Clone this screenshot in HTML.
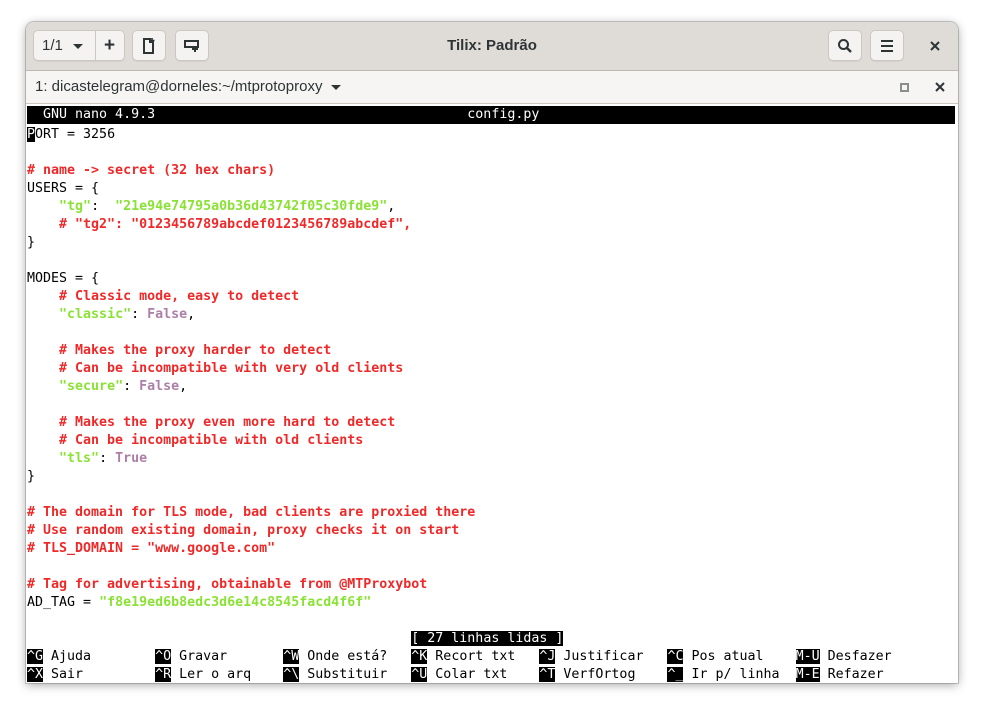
<!DOCTYPE html>
<html><head><meta charset="utf-8"><style>
html,body{margin:0;padding:0;width:984px;height:712px;background:#fff;overflow:hidden}
#win{position:absolute;left:26px;top:22px;width:932px;height:661px;background:#fff;border-radius:8px 8px 0 0;box-shadow:0 2px 10px rgba(0,0,0,.35),0 0 0 1px rgba(0,0,0,.18);overflow:hidden}
#hdr{position:absolute;left:0;top:0;width:932px;height:48px;background:#dfdcd8;border-bottom:1px solid #bfb8b1;font-family:"Liberation Sans",sans-serif}
.btn{position:absolute;top:8px;height:31px;background:#f4f3f2;border:1px solid #cdc7c2;border-radius:5px;box-sizing:border-box;box-shadow:0 1px 0 rgba(0,0,0,.05)}
#title{position:absolute;left:0;width:932px;top:15px;text-align:center;font-weight:bold;font-size:15px;color:#2e3436}
#tab{position:absolute;left:0;top:49px;width:932px;height:32px;background:#f6f5f4;border-bottom:1px solid #cdc7c2;font-family:"Liberation Sans",sans-serif;font-size:15px;color:#2e3436}
#term{position:absolute;left:1px;top:86px;width:930px;height:575px;background:#fff}
.l{position:absolute;left:0;height:18px;line-height:18px;white-space:pre;font-family:"DejaVu Sans Mono",monospace;font-size:13.3px;color:#000}
.r{color:#ef2929;font-weight:bold}.g{color:#8ae234;font-weight:bold}.p{color:#ad7fa8;font-weight:bold}
.i{background:#000;color:#fff}
</style></head><body>
<div id="win">
<div id="hdr">
 <div class="btn" style="left:7px;width:92px"></div>
 <div style="position:absolute;left:69px;top:9px;width:1px;height:29px;background:#cdc7c2"></div>
 <div style="position:absolute;left:16px;top:15px;font-size:15px;color:#2e3436">1/1</div>
 <div style="position:absolute;left:47px;top:22px;width:0;height:0;border-left:5px solid transparent;border-right:5px solid transparent;border-top:5px solid #2e3436"></div>
 <div style="position:absolute;left:78px;top:13px;font-size:19px;font-weight:bold;color:#2e3436">+</div>
 <div class="btn" style="left:106px;width:34px"></div>
 <svg style="position:absolute;left:114px;top:15px" width="18" height="18"><path d="M4 2h6v3h3v11H4z" fill="none" stroke="#2e3436" stroke-width="2"/><path d="M12 1v5M9.5 3.5h5" stroke="#2e3436" stroke-width="1.6"/></svg>
 <div class="btn" style="left:149px;width:34px"></div>
 <svg style="position:absolute;left:157px;top:15px" width="18" height="18"><path d="M2 4h13v6H2z" fill="none" stroke="#2e3436" stroke-width="2"/><path d="M12 9v6M9 12h6" stroke="#2e3436" stroke-width="2"/></svg>
 <div id="title">Tilix: Padrão</div>
 <div class="btn" style="left:802px;width:34px"></div>
 <svg style="position:absolute;left:810px;top:15px" width="18" height="18"><circle cx="7.5" cy="7.5" r="4.5" fill="none" stroke="#2e3436" stroke-width="2"/><path d="M11 11l4 4" stroke="#2e3436" stroke-width="2.4"/></svg>
 <div class="btn" style="left:844px;width:34px"></div>
 <svg style="position:absolute;left:852px;top:15px" width="18" height="18"><path d="M3 4h12M3 9h12M3 14h12" stroke="#2e3436" stroke-width="2"/></svg>
 <svg style="position:absolute;left:903px;top:18px" width="12" height="12"><path d="M2 2l8 8M10 2l-8 8" stroke="#2e3436" stroke-width="2"/></svg>
</div>
<div id="tab">
 <div style="position:absolute;left:9px;top:7px">1: dicastelegram@dorneles:~/mtprotoproxy</div>
 <div style="position:absolute;left:305px;top:14px;width:0;height:0;border-left:5px solid transparent;border-right:5px solid transparent;border-top:5px solid #2e3436"></div>
 <div style="position:absolute;left:874px;top:12px;width:5px;height:5px;border:2px solid #8b8e8f"></div>
 <svg style="position:absolute;left:908px;top:10px" width="12" height="12"><path d="M2 2l8 8M10 2l-8 8" stroke="#2e3436" stroke-width="2"/></svg>
</div>
<div id="term">
<div class="l i" style="top:-2px;width:928px">  GNU nano 4.9.3                                       config.py</div>
<div class="l" style="top:18px"><span class="i">P</span>ORT = 3256</div>
<div class="l r" style="top:54px"># name -&gt; secret (32 hex chars)</div>
<div class="l" style="top:72px">USERS = {</div>
<div class="l" style="top:90px">    <span class="g">"tg"</span>:  <span class="g">"21e94e74795a0b36d43742f05c30fde9"</span>,</div>
<div class="l r" style="top:108px">    # "tg2": "0123456789abcdef0123456789abcdef",</div>
<div class="l" style="top:126px">}</div>
<div class="l" style="top:162px">MODES = {</div>
<div class="l r" style="top:180px">    # Classic mode, easy to detect</div>
<div class="l" style="top:198px">    <span class="g">"classic"</span>: <span class="p">False</span>,</div>
<div class="l r" style="top:234px">    # Makes the proxy harder to detect</div>
<div class="l r" style="top:252px">    # Can be incompatible with very old clients</div>
<div class="l" style="top:270px">    <span class="g">"secure"</span>: <span class="p">False</span>,</div>
<div class="l r" style="top:306px">    # Makes the proxy even more hard to detect</div>
<div class="l r" style="top:324px">    # Can be incompatible with old clients</div>
<div class="l" style="top:342px">    <span class="g">"tls"</span>: <span class="p">True</span></div>
<div class="l" style="top:360px">}</div>
<div class="l r" style="top:396px"># The domain for TLS mode, bad clients are proxied there</div>
<div class="l r" style="top:414px"># Use random existing domain, proxy checks it on start</div>
<div class="l r" style="top:432px"># TLS_DOMAIN = "www.google.com"</div>
<div class="l r" style="top:468px"># Tag for advertising, obtainable from @MTProxybot</div>
<div class="l" style="top:486px">AD_TAG = <span class="g">"f8e19ed6b8edc3d6e14c8545facd4f6f"</span></div>
<div class="l" style="top:522px">                                                <span class="i">[ 27 linhas lidas ]</span></div>
<div class="l" style="top:540px"><span class="i">^G</span> Ajuda        <span class="i">^O</span> Gravar       <span class="i">^W</span> Onde está?   <span class="i">^K</span> Recort txt   <span class="i">^J</span> Justificar   <span class="i">^C</span> Pos atual    <span class="i">M-U</span> Desfazer</div>
<div class="l" style="top:558px"><span class="i">^X</span> Sair         <span class="i">^R</span> Ler o arq    <span class="i">^\</span> Substituir   <span class="i">^U</span> Colar txt    <span class="i">^T</span> VerfOrtog    <span class="i">^_</span> Ir p/ linha  <span class="i">M-E</span> Refazer</div>
</div>
</div>
</body></html>
